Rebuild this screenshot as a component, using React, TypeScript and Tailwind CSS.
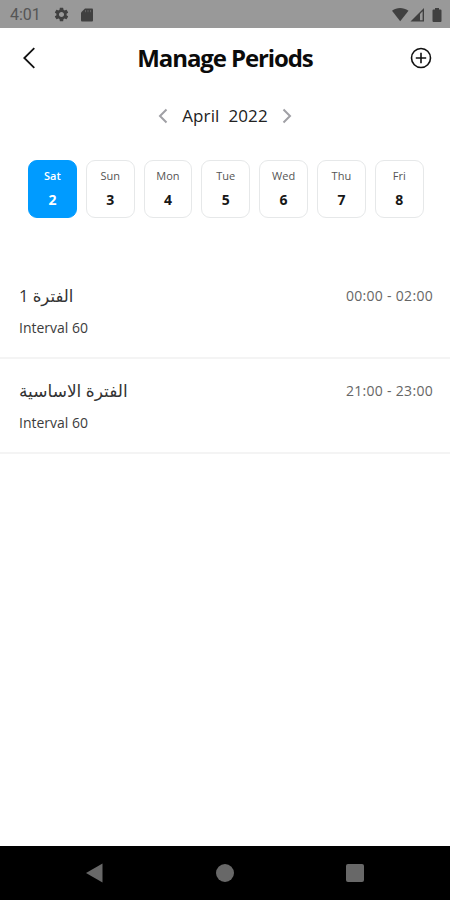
import React, { useState } from 'react';
import { MdSettings } from 'react-icons/md';

interface Day {
    name: string;
    date: number;
}

interface Period {
    title: string;
    titleClass: string;
    interval: number;
    hours: string;
}

const days: Day[] = [
    { name: 'Sat', date: 2 },
    { name: 'Sun', date: 3 },
    { name: 'Mon', date: 4 },
    { name: 'Tue', date: 5 },
    { name: 'Wed', date: 6 },
    { name: 'Thu', date: 7 },
    { name: 'Fri', date: 8 },
];

const periods: Period[] = [
    { title: 'الفترة 1', titleClass: 'text-[16.500px]', interval: 60, hours: '00:00 - 02:00' },
    { title: 'الفترة الاساسية', titleClass: 'text-[17px]', interval: 60, hours: '21:00 - 23:00' },
];

const StatusBar: React.FC = () => (
    <div className="flex h-7 shrink-0 items-center justify-between bg-[#999999] pl-[10px] pr-2 pt-px text-[#404040]">
        <div className="flex items-center">
            <span className="w-[43px] font-['Roboto',sans-serif] text-[16px] leading-none text-[#555555]">4:01</span>
            <MdSettings className="size-[17px]" />
            <svg className="ml-[10px]" width="14" height="14" viewBox="0 0 14 14" fill="currentColor">
                <path d="M5 .5h7a1 1 0 0 1 1 1v11a1 1 0 0 1-1 1H2a1 1 0 0 1-1-1v-8z" />
                <path d="M5.500 2v2.200M8 2v2.200M10.500 2v2.200" stroke="#606060" strokeWidth="1" />
            </svg>
        </div>
        <svg width="50" height="14" viewBox="0 0 50 14" fill="currentColor">
            {/* wifi */}
            <path d="M0 2.800C5-.8 11-.8 16.500 2.800L8.200 13.200z" />
            {/* signal */}
            <path d="M32 0v13.500H18.500z" />
            <path d="M28 6l2.600-2.700v8.900H28z" fill="#999999" />
            {/* battery */}
            <path d="M43 0h4v1.500h1.500a1 1 0 0 1 1 1V13a1 1 0 0 1-1 1h-7a1 1 0 0 1-1-1V2.500a1 1 0 0 1 1-1H43z" />
        </svg>
    </div>
);

const Header: React.FC = () => (
    <header className="flex h-[60px] shrink-0 items-center justify-between pl-[22px] pr-[18px]">
        <button aria-label="Back" className="w-[22px]">
            <svg width="14" height="22" viewBox="0 0 14 22" fill="none" stroke="#111111" strokeWidth="1.8">
                <path d="M12.300 1.200L2.300 11l10 9.800" />
            </svg>
        </button>
        <h1 className="whitespace-nowrap pr-1 text-[24px] font-bold leading-none tracking-[-1.100px] text-[#0b0b0b]">
            Manage Periods
        </h1>
        <button aria-label="Add period">
            <svg width="22" height="22" viewBox="0 0 22 22" fill="none" stroke="#111111" strokeWidth="1.6">
                <circle cx="11" cy="11" r="9.500" />
                <path d="M11 5.800v10.400M5.800 11h10.400" />
            </svg>
        </button>
    </header>
);

const App: React.FC = () => {
    const [selected, setSelected] = useState(2);

    return (
        <div className="flex h-[900px] w-[450px] flex-col overflow-hidden bg-white font-['Open_Sans','DejaVu_Sans',sans-serif]">
            <StatusBar />
            <Header />

            {/* Month switcher */}
            <div className="flex h-14 shrink-0 items-center justify-center gap-[14px] text-[#a0a0a5]">
                <svg width="10" height="16" viewBox="0 0 10 16" fill="none" stroke="currentColor" strokeWidth="2">
                    <path d="M8.500 1.500L2 8l6.500 6.500" />
                </svg>
                <span className="whitespace-pre pb-0.5 text-[17px] leading-none tracking-[0.100px] text-[#222222]">
                    April  2022
                </span>
                <svg width="10" height="16" viewBox="0 0 10 16" fill="none" stroke="currentColor" strokeWidth="2">
                    <path d="M1.500 1.500L8 8l-6.500 6.500" />
                </svg>
            </div>

            {/* Week days */}
            <div className="mt-4 flex shrink-0 gap-[9px] pl-7">
                {days.map((day) => (
                    <button
                        key={day.date}
                        onClick={() => setSelected(day.date)}
                        className={`flex h-[58px] w-[48.800px] flex-col items-center rounded-[9px] border pt-[9px] ${
                            day.date === selected
                                ? 'border-[#009bff] bg-[#009bff] text-white'
                                : 'border-[#e6e8e9] bg-white text-[#171717]'
                        }`}
                    >
                        <span className={`text-[11px] leading-3 ${day.date === selected ? 'font-semibold' : 'text-[#555555]'}`}>
                            {day.name}
                        </span>
                        <span className="mt-[10px] text-[14px] font-bold leading-4">{day.date}</span>
                    </button>
                ))}
            </div>

            {/* Periods */}
            <div className="mt-[46px]">
                {periods.map((period) => (
                    <div key={period.hours} className="h-[95px] border-b-2 border-[#f4f4f4] pl-[19px] pr-[17px] pt-[22px]">
                        <div className="flex items-center justify-between">
                            <span dir="rtl" className={`leading-5 text-[#333333] ${period.titleClass}`}>
                                {period.title}
                            </span>
                            <span className="text-[14px] leading-5 tracking-[0.300px] text-[#666666]">{period.hours}</span>
                        </div>
                        <div className="mt-3 text-[14px] leading-5 text-[#3c3c3c]">Interval {period.interval}</div>
                    </div>
                ))}
            </div>

            {/* System navigation */}
            <div className="mt-auto flex h-[54px] shrink-0 items-center justify-between bg-black pl-[86px] pr-[86px] text-[#686868]">
                <svg width="17" height="20" viewBox="0 0 17 20" fill="currentColor">
                    <path d="M16.500 .5v19L0 10z" />
                </svg>
                <div className="size-[18px] rounded-full bg-current" />
                <div className="size-[18px] rounded-[2px] bg-current" />
            </div>
        </div>
    );
};

export default App;
